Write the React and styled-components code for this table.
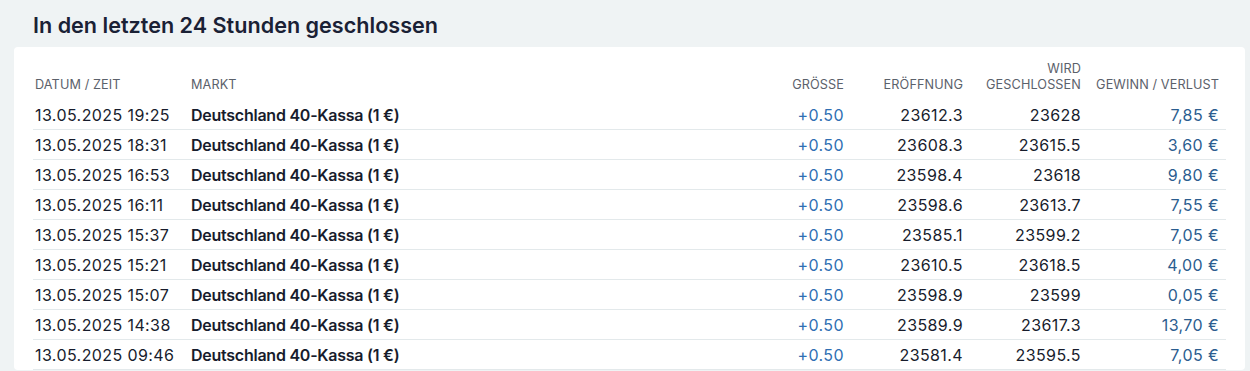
import React from "react";
import styled, { createGlobalStyle } from "styled-components";

const GlobalStyle = createGlobalStyle`
  html, body {
    margin: 0;
    padding: 0;
    background: #eff3f4;
    font-family: Inter, "Liberation Sans", sans-serif;
  }
`;

const Page = styled.div`
  padding: 12px 5px 0 14px;
`;

const Title = styled.h2`
  margin: 0 0 9px 19px;
  font-size: 21.6px;
  line-height: 26px;
  font-weight: 600;
  color: #1a2135;
`;

const Card = styled.div`
  background: #ffffff;
  border-radius: 4px;
  padding: 14px 19px 0 19px;
`;

const Table = styled.table`
  width: 100%;
  border-collapse: collapse;
`;

const Th = styled.th`
  box-sizing: border-box;
  font-size: 12.7px;
  line-height: 16px;
  font-weight: 400;
  letter-spacing: 0.1px;
  text-transform: uppercase;
  color: #5b616b;
  text-align: ${(p) => (p.right ? "right" : "left")};
  vertical-align: bottom;
  padding: 0 ${(p) => (p.right ? "7px" : "0")} 7px 2px;
  width: ${(p) => p.w || "auto"};
`;

const Tr = styled.tr`
  border-bottom: 1px solid #e3e9eb;
`;

const Td = styled.td`
  height: 29px;
  font-size: 16px;
  letter-spacing: ${(p) => (p.bold ? "-0.25px" : "0.4px")};
  font-weight: ${(p) => (p.bold ? 600 : 400)};
  color: ${(p) => p.color || "#171c2c"};
  text-align: ${(p) => (p.right ? "right" : "left")};
  padding: 0 ${(p) => (p.right ? "7px" : "0")} 0 2px;
  white-space: nowrap;
`;

const rows = [
  ["13.05.2025 19:25", "23612.3", "23628", "7,85 €"],
  ["13.05.2025 18:31", "23608.3", "23615.5", "3,60 €"],
  ["13.05.2025 16:53", "23598.4", "23618", "9,80 €"],
  ["13.05.2025 16:11", "23598.6", "23613.7", "7,55 €"],
  ["13.05.2025 15:37", "23585.1", "23599.2", "7,05 €"],
  ["13.05.2025 15:21", "23610.5", "23618.5", "4,00 €"],
  ["13.05.2025 15:07", "23598.9", "23599", "0,05 €"],
  ["13.05.2025 14:38", "23589.9", "23617.3", "13,70 €"],
  ["13.05.2025 09:46", "23581.4", "23595.5", "7,05 €"],
];

export default function App() {
  return (
    <>
      <GlobalStyle />
      <Page>
        <Title>In den letzten 24 Stunden geschlossen</Title>
        <Card>
          <Table>
            <thead>
              <tr>
                <Th w="156px">Datum / Zeit</Th>
                <Th>Markt</Th>
                <Th right>Grösse</Th>
                <Th right w="119px">Eröffnung</Th>
                <Th right w="118px">
                  Wird
                  <br />
                  geschlossen
                </Th>
                <Th right w="138px">Gewinn / Verlust</Th>
              </tr>
            </thead>
            <tbody>
              {rows.map(([date, open, close, pl]) => (
                <Tr key={date}>
                  <Td>{date}</Td>
                  <Td bold>Deutschland 40-Kassa (1 €)</Td>
                  <Td right color="#2f6fb3">+0.50</Td>
                  <Td right>{open}</Td>
                  <Td right>{close}</Td>
                  <Td right color="#2b5d8f">{pl}</Td>
                </Tr>
              ))}
            </tbody>
          </Table>
        </Card>
      </Page>
    </>
  );
}
